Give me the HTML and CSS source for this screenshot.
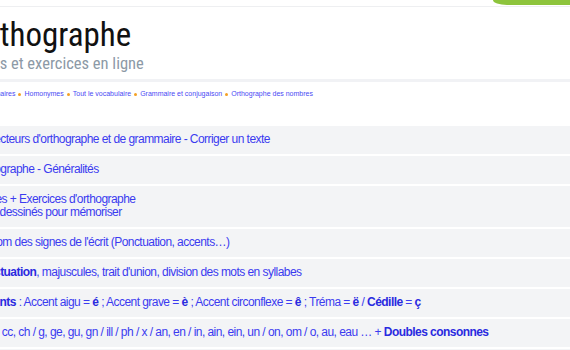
FILE: index.html
```html
<!DOCTYPE html>
<html lang="fr">
<head>
  <meta charset="UTF-8">
  <meta name="viewport" content="width=device-width, initial-scale=1.0">
  <title>Orthographe - Cours et exercices en ligne</title>
  <link rel="stylesheet" href="styles.css">
</head>

<body>
  <header class="topbar">
    <a class="compte" href="#"></a>
  </header>

  <div class="page">
    <div class="marque">
      <h1>Orthographe</h1>
      <p>Cours et exercices en ligne</p>
    </div>
  </div>

  <div class="bande"></div>

  <div class="page">
    <ul class="liens">
      <li><a href="#">Dictionnaires</a></li>
      <li><a href="#">Homonymes</a></li>
      <li><a href="#">Tout le vocabulaire</a></li>
      <li><a href="#">Grammaire et conjugaison</a></li>
      <li><a href="#">Orthographe des nombres</a></li>
    </ul>

    <ul class="sommaire">
      <li><a href="#">Correcteurs d'orthographe et de grammaire - Corriger un texte</a></li>
      <li><a href="#">Orthographe - Généralités</a></li>
      <li><a href="#">Règles + Exercices d'orthographe<br>Mots dessinés pour mémoriser</a></li>
      <li><a href="#">Le Nom des signes de l'écrit (Ponctuation, accents…)</a></li>
      <li><a href="#"><b>Ponctuation</b>, majuscules, trait d'union, division des mots en syllabes</a></li>
      <li><a href="#"><b>Accents</b> : Accent aigu = <b>é</b> ; Accent grave = <b>è</b> ; Accent circonflexe = <b>ê</b> ; Tréma = <b>ë</b> / <b>Cédille</b> = <b>ç</b></a></li>
      <li><a href="#">c, qu, cc, ch / g, ge, gu, gn / ill / ph / x / an, en / in, ain, ein, un / on, om / o, au, eau … + <b>Doubles consonnes</b></a></li>
      <li><a href="#">Homophones grammaticaux : a / à, et / est, son / sont, ce / se</a></li>
    </ul>
  </div>
</body>
</html>
```

FILE: styles.css
```css
body {
  margin: 0;
  font-family: "Liberation Sans", Arial, sans-serif;
  background: #fff;
  overflow: hidden;
}

.topbar {
  display: flex;
  justify-content: flex-end;
  height: 6px;
  border-bottom: 1px solid #eeeff1;
}

.compte {
  display: block;
  width: 77px;
  height: 5px;
  background: #8dc43c;
  border-bottom-left-radius: 14px 5px;
}

/* la page est décalée vers la gauche, comme dans la capture */
.page {
  margin-left: -40px;
  width: 660px;
}

.marque {
  padding: 9px 0 5px 9px;
  font-family: "Roboto Condensed", Roboto, sans-serif;
  font-stretch: condensed;
}

.marque h1 {
  margin: 0;
  font-size: 33px;
  font-weight: 400;
  line-height: 38px;
  color: #111;
}

.marque p {
  margin: 0;
  font-size: 16.5px;
  line-height: 20px;
  color: #8c99a6;
}

.bande {
  height: 3px;
  background: #f1f2f5;
}

.liens {
  display: flex;
  list-style: none;
  margin: 0;
  padding: 7px 0 0 15px;
  font-size: 7px;
  line-height: 10px;
}

.liens li {
  display: flex;
  align-items: center;
}

.liens li + li::before {
  content: "";
  width: 3px;
  height: 3px;
  margin: 0 3px;
  border-radius: 50%;
  background: #f4a124;
}

.liens a {
  color: #4a4af4;
  text-decoration: none;
}

.sommaire {
  list-style: none;
  margin: 27px 0 0;
  padding: 0;
}

.sommaire li {
  background: #f3f4f6;
  padding: 7px 0 7.5px 13px;
  margin-bottom: 2.5px;
  font-size: 12px;
  line-height: 13px;
  letter-spacing: -0.55px;
}

.sommaire a {
  color: #3b3bf0;
  text-decoration: none;
}

.sommaire b {
  color: #2a2ae0;
}
```
